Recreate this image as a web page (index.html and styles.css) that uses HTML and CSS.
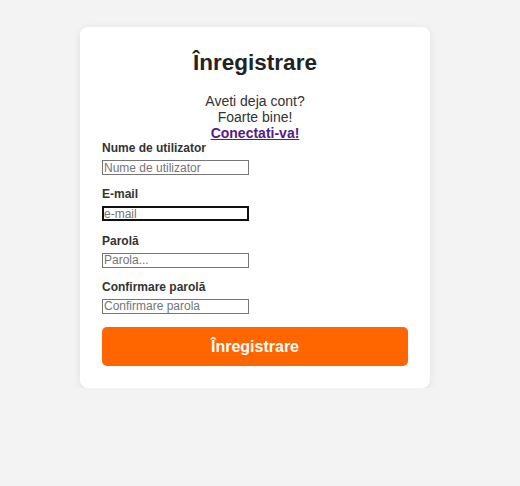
FILE: index.html
```html
<!DOCTYPE html>
<html lang="ro">
<head>
<meta charset="utf-8">
<title>Înregistrare</title>
<link rel="stylesheet" href="styles.css">
</head>
<body>
<div class="card">
  <h1 class="title">Înregistrare</h1>
  <p class="intro">Aveti deja cont?<br>Foarte bine!<br><a class="link" href="#">Conectati-va!</a></p>
  <form class="form">
    <div class="group">
      <label class="label">Nume de utilizator</label>
      <input class="input" type="text" placeholder="Nume de utilizator">
    </div>
    <div class="group">
      <label class="label">E-mail</label>
      <input class="input input-focus" type="email" placeholder="e-mail">
    </div>
    <div class="group">
      <label class="label">Parolă</label>
      <input class="input" type="password" placeholder="Parola...">
    </div>
    <div class="group">
      <label class="label">Confirmare parolă</label>
      <input class="input" type="password" placeholder="Confirmare parola">
    </div>
    <button class="btn" type="button">Înregistrare</button>
  </form>
</div>
</body>
</html>
```
FILE: styles.css
```css
html, body {
  margin: 0;
  padding: 0;
}
body {
  background: #f3f3f3;
  font-family: "Liberation Sans", Arial, sans-serif;
  color: #333;
  padding: 27px 10px 0 0;
}
.card {
  width: 350px;
  box-sizing: border-box;
  margin: 0 auto;
  background: #fff;
  border-radius: 8px;
  box-shadow: 0 2px 8px rgba(0, 0, 0, 0.08);
  padding: 23px 22px 22px;
}
.title {
  margin: 0;
  font-size: 22.5px;
  font-weight: bold;
  text-align: center;
  color: #222;
  line-height: 25px;
}
.intro {
  margin: 18px 0 0;
  text-align: center;
  font-size: 14px;
  line-height: 16px;
  color: #333;
}
.link {
  color: #551a8b;
  font-weight: bold;
  text-decoration: underline;
}
.form {
  display: flex;
  flex-direction: column;
}
.group {
  display: flex;
  flex-direction: column;
  align-items: flex-start;
  margin-bottom: 12.33px;
}
.label {
  font-size: 12px;
  font-weight: bold;
  line-height: 14px;
  color: #333;
  margin-bottom: 5px;
}
.input {
  box-sizing: border-box;
  width: 147px;
  height: 15px;
  padding: 0 1px;
  margin: 0;
  border: 1px solid #767676;
  font-family: "Liberation Sans", Arial, sans-serif;
  font-size: 12px;
  line-height: 13px;
  background: #fff;
}
.input::placeholder {
  color: #757575;
}
.input-focus {
  border: 2px solid #111;
  padding: 0;
}
.btn {
  margin-top: 1px;
  height: 39px;
  border: none;
  border-radius: 5px;
  background: #ff6600;
  color: #fff;
  font-family: "Liberation Sans", Arial, sans-serif;
  font-size: 16px;
  font-weight: bold;
  cursor: pointer;
}
```
